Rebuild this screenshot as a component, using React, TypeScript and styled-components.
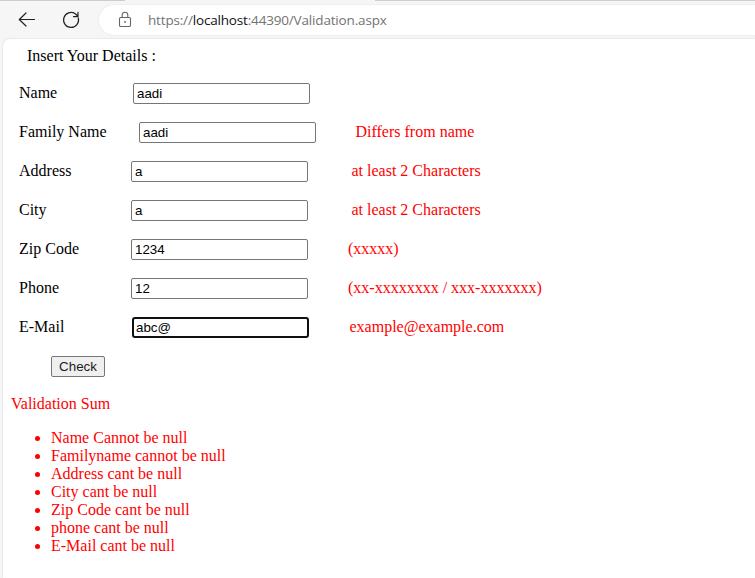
import React from "react";
import styled, { createGlobalStyle } from "styled-components";

const GlobalStyle = createGlobalStyle`
  * { box-sizing: border-box; }
  body { margin: 0; background: #f6f6f6; overflow: hidden; }
`;

const Browser = styled.div`
  display: flex;
  flex-direction: column;
  height: 578px;
  background: #f6f6f6;
`;

const TabEdge = styled.div`
  display: flex;
  justify-content: space-between;
  height: 1px;
`;

const InactiveTabs = styled.div<{ $width: number }>`
  width: ${(p) => p.$width}px;
  background: #cdcdcd;
`;

const Toolbar = styled.div`
  display: flex;
  height: 37px;
  padding-top: 4px;
`;

const Navigation = styled.div`
  display: flex;
  flex: none;
  width: 99px;
  padding: 4px 0 0 17px;
  gap: 24px;
`;

const AddressBar = styled.div`
  display: flex;
  align-items: center;
  flex: 1;
  height: 30px;
  padding-left: 17px;
  border-radius: 15px 0 0 15px;
  background: #fff;
  box-shadow: 0 0 2px #dedede;
`;

const Url = styled.span`
  margin-left: 14px;
  font: 13.5px/20px "Open Sans", sans-serif;
  letter-spacing: -0.17px;
  color: #737373;
  white-space: nowrap;
`;

const Host = styled.span`
  color: #111;
`;

const Page = styled.main`
  flex: 1;
  margin: 1px 0 0 3px;
  padding: 8px 8px 0;
  border-radius: 7px 0 0 0;
  background: #fff;
  box-shadow: 0 0 2px #cfcfcf;
  font: 16px/18px "Liberation Serif", serif;
  color: #000;
`;

const Heading = styled.div`
  padding-left: 16px;
`;

const Form = styled.form`
  display: flex;
  flex-direction: column;
  gap: 18px;
  padding: 18px 0 0 8px;
`;

const Row = styled.div`
  display: flex;
  height: 21px;
`;

const Label = styled.label<{ $width: number }>`
  flex: none;
  width: ${(p) => p.$width}px;
  padding-top: 1px;
`;

const Field = styled.input<{ $active?: boolean }>`
  flex: none;
  width: 177px;
  height: 21px;
  margin: 0;
  padding: 1px 2px;
  border: ${(p) => (p.$active ? "2px solid #101010" : "1px solid #767676")};
  border-radius: ${(p) => (p.$active ? 3 : 2)}px;
  padding-left: ${(p) => (p.$active ? 2 : 3)}px;
  outline: none;
  background: #fff;
  font: 13.333px "Liberation Sans", Arial, sans-serif;
  color: #000;
`;

const Hint = styled.span<{ $gap: number }>`
  margin-left: ${(p) => p.$gap}px;
  padding-top: 1px;
  color: #f00;
  white-space: nowrap;
`;

const CheckButton = styled.button`
  width: 54px;
  height: 21px;
  margin-left: 32px;
  padding: 0;
  border: 1px solid #767676;
  border-radius: 2px;
  background: #efefef;
  font: 13.333px "Liberation Sans", Arial, sans-serif;
  color: #1a1a1a;
`;

const Summary = styled.section`
  padding-top: 18px;
  color: #f00;
`;

const ErrorList = styled.ul`
  margin: 16px 0 0;
  padding-left: 40px;
`;

const Icon = styled.svg`
  flex: none;
  display: block;
  fill: none;
  stroke-linecap: round;
  stroke-linejoin: round;
`;

const fields = [
  { label: "Name", width: 114, value: "aadi", hint: "", gap: 0 },
  { label: "Family Name", width: 120, value: "aadi", hint: "Differs from name", gap: 39.5 },
  { label: "Address", width: 112, value: "a", hint: "at least 2 Characters", gap: 43.5 },
  { label: "City", width: 112, value: "a", hint: "at least 2 Characters", gap: 43.5 },
  { label: "Zip Code", width: 112, value: "1234", hint: "(xxxxx)", gap: 40 },
  { label: "Phone", width: 112, value: "12", hint: "(xx-xxxxxxxx / xxx-xxxxxxx)", gap: 40 },
  { label: "E-Mail", width: 113, value: "abc@", hint: "example@example.com", gap: 40.5, active: true },
];

const errors = [
  "Name Cannot be null",
  "Familyname cannot be null",
  "Address cant be null",
  "City cant be null",
  "Zip Code cant be null",
  "phone cant be null",
  "E-Mail cant be null",
];

export default function App() {
  return (
    <>
      <GlobalStyle />
      <Browser>
        <TabEdge>
          <InactiveTabs $width={125} />
          <InactiveTabs $width={380} />
        </TabEdge>
        <Toolbar>
          <Navigation>
            <Icon width="20" height="22" viewBox="0 0 20 22" stroke="#222" strokeWidth="1.2">
              <path d="M17.5 10.5H2.5M9 4 2.3 10.5 9 17" />
            </Icon>
            <Icon width="20" height="22" viewBox="0 0 20 22" stroke="#222" strokeWidth="1.2">
              <path d="M17.3 9A7.5 7.5 0 1 1 14.2 4.7L17 7.3M17 3.3V7.7H12.5" />
            </Icon>
          </Navigation>
          <AddressBar>
            <Icon width="18" height="20" viewBox="0 0 18 20" stroke="#666" strokeWidth="1.1">
              <rect x="3.5" y="7.5" width="11" height="9" rx="1.3" />
              <path d="M6.2 7.3V5a2.8 2.8 0 0 1 5.6 0v2.3" />
              <circle cx="9" cy="12" r=".9" fill="#666" stroke="none" />
            </Icon>
            <Url>
              https://<Host>localhost</Host>:44390/Validation.aspx
            </Url>
          </AddressBar>
        </Toolbar>
        <Page>
          <Heading>Insert Your Details :</Heading>
          <Form onSubmit={(e) => e.preventDefault()}>
            {fields.map((f) => (
              <Row key={f.label}>
                <Label $width={f.width}>{f.label}</Label>
                <Field $active={f.active} defaultValue={f.value} aria-label={f.label} spellCheck={false} />
                {f.hint && <Hint $gap={f.gap}>{f.hint}</Hint>}
              </Row>
            ))}
            <Row>
              <CheckButton>Check</CheckButton>
            </Row>
          </Form>
          <Summary>
            Validation Sum
            <ErrorList>
              {errors.map((e) => (
                <li key={e}>{e}</li>
              ))}
            </ErrorList>
          </Summary>
        </Page>
      </Browser>
    </>
  );
}
